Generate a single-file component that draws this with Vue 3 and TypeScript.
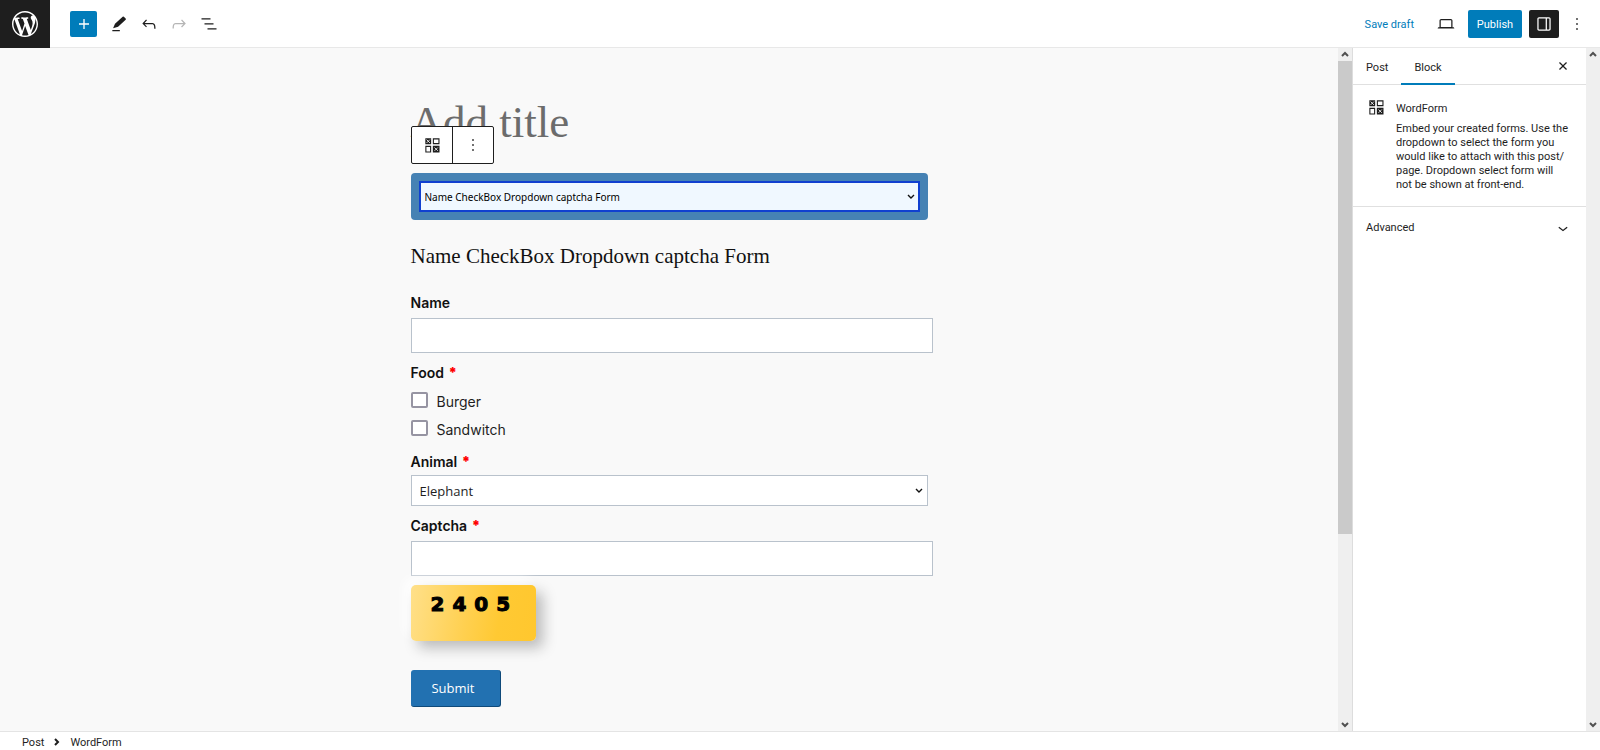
<script setup lang="ts">
import { ref } from 'vue'

const formName = 'Name CheckBox Dropdown captcha Form'
const selectedForm = ref(formName)
const animal = ref('Elephant')
const foods = ['Burger', 'Sandwitch']
const captchaDigits = ['2', '4', '0', '5']

const icons = {
  wordpress:
    'M20 10c0-5.51-4.49-10-10-10C4.48 0 0 4.49 0 10c0 5.52 4.48 10 10 10 5.51 0 10-4.48 10-10zM7.78 15.37L4.37 6.22c.55-.02 1.17-.08 1.17-.08.5-.06.44-1.13-.06-1.11 0 0-1.45.11-2.37.11-.18 0-.37 0-.58-.01C4.12 2.69 6.87 1.11 10 1.11c2.33 0 4.45.87 6.05 2.34-.68-.11-1.65.39-1.65 1.58 0 .74.45 1.36.9 2.1.35.61.55 1.36.55 2.46 0 1.49-1.4 5-1.4 5l-3.03-8.37c.54-.02.82-.17.82-.17.5-.05.44-1.25-.06-1.22 0 0-1.44.12-2.38.12-.87 0-2.33-.12-2.33-.12-.5-.03-.56 1.2-.06 1.22l.92.08 1.26 3.41zM17.41 10c.24-.64.74-1.87.43-4.25.7 1.29 1.05 2.71 1.05 4.25 0 3.29-1.73 6.24-4.4 7.78.97-2.59 1.94-5.2 2.92-7.78zM6.1 18.09C3.12 16.65 1.11 13.53 1.11 10c0-1.3.23-2.48.72-3.59C3.25 10.3 4.67 14.2 6.1 18.09zm4.03-6.63l2.58 6.98c-.86.29-1.76.45-2.71.45-.79 0-1.57-.11-2.29-.33.81-2.38 1.62-4.74 2.42-7.1z',
  plus: 'M18 11.2h-5.2V6h-1.6v5.2H6v1.6h5.2V18h1.6v-5.2H18z',
  edit: 'M20 5.500L17.800 3.200Q17.100 2.600 16.400 3.200L7.200 11.700l-2.300 5.400 6-1.900L20 7Q20.700 6.300 20 5.500zM4 20.800h9v-1.600H4z',
  undo: 'M18.3 11.7c-.6-.6-1.4-.9-2.3-.9H6.7l2.9-3.3-1.1-1-4.5 5L8.5 16l1-1-2.7-2.7H16c.5 0 .9.2 1.3.5 1 1 1 3.4 1 4.5v.3h1.5v-.2c0-1.5 0-4.3-1.5-5.7z',
  redo: 'M15.6 6.5l-1.1 1 2.9 3.3H8c-.9 0-1.7.3-2.3.9-1.4 1.5-1.4 4.2-1.4 5.6v.2h1.5v-.3c0-1.1 0-3.5 1-4.5.3-.3.7-.5 1.3-.5h9.2L14.5 15l1.1 1.1 4.6-4.6-4.6-5z',
  list: 'M13.8 5.2H3v1.5h10.8V5.2zm-3.6 12v1.5H21v-1.5H10.2zm7.2-6H6.6v1.5h10.8v-1.5z',
  laptop:
    'M20.5 16h-.7V8c0-1.1-.9-2-2-2H6.2c-1.1 0-2 .9-2 2v8h-.7c-.8 0-1.5.7-1.5 1.5h20c0-.8-.7-1.5-1.5-1.5zM5.7 8c0-.3.2-.5.5-.5h11.6c.3 0 .5.2.5.5v7.6H5.7V8z',
  drawer:
    'M18 4H6c-1.1 0-2 .9-2 2v12c0 1.1.9 2 2 2h12c1.1 0 2-.9 2-2V6c0-1.1-.9-2-2-2zm-4 14.5H6c-.3 0-.5-.2-.5-.5V6c0-.3.2-.5.5-.5h8v13zm4.5-.5c0 .3-.2.5-.5.5h-2.5v-13H18c.3 0 .5.2.5.5v12z',
  more: 'M13 19h-2v-2h2v2zm0-6h-2v-2h2v2zm0-6h-2V5h2v2z',
  close:
    'M12 13.06l3.712 3.713 1.061-1.06L13.061 12l3.712-3.712-1.06-1.06L12 10.938 8.288 7.227l-1.061 1.06L10.939 12l-3.712 3.712 1.06 1.061L12 13.061z',
  chevron: 'M17.5 11.6L12 16l-5.5-4.4.9-1.2L12 14l4.5-3.6 1 1.2z',
  block:
    'M4 4h7v7H4zM13 4h8v7h-8zM14.300 5.300v4.400h5.400v-4.400zM4 13h7v8H4zM5.300 14.300v5.400h4.400v-5.400zM13 13h8v8h-8z',
}

const tools = [
  { label: 'Tools', path: icons.edit, disabled: false },
  { label: 'Undo', path: icons.undo, disabled: false },
  { label: 'Redo', path: icons.redo, disabled: true },
  { label: 'List view', path: icons.list, disabled: false },
]
</script>

<template>
  <div class="editor">
    <header class="topbar">
      <a class="logo" href="#" aria-label="View posts">
        <svg viewBox="0 0 20 20" width="26" height="26"><path :d="icons.wordpress" /></svg>
      </a>
      <div class="tools">
        <button class="inserter" type="button" aria-label="Add block">
          <svg viewBox="0 0 24 24" width="20" height="20"><path :d="icons.plus" /></svg>
        </button>
        <button
          v-for="tool in tools"
          :key="tool.label"
          class="tool"
          type="button"
          :aria-label="tool.label"
          :disabled="tool.disabled"
        >
          <svg viewBox="0 0 24 24" width="20" height="20"><path :d="tool.path" /></svg>
        </button>
      </div>
      <div class="actions">
        <button class="save" type="button">Save draft</button>
        <button class="preview" type="button" aria-label="Preview">
          <svg viewBox="0 0 24 24" width="20" height="20"><path :d="icons.laptop" /></svg>
        </button>
        <button class="publish" type="button">Publish</button>
        <button class="settings" type="button" aria-label="Settings">
          <svg viewBox="0 0 24 24" width="20" height="20"><path :d="icons.drawer" /></svg>
        </button>
        <button class="options" type="button" aria-label="Options">
          <svg viewBox="0 0 24 24" width="20" height="20"><path :d="icons.more" /></svg>
        </button>
      </div>
    </header>

    <div class="workspace">
      <main class="canvas">
        <div class="column">
          <h1 class="title">Add title</h1>
          <div class="block-toolbar">
            <button type="button" aria-label="WordForm">
              <svg viewBox="0 0 24 24" width="20" height="20">
                <path fill-rule="evenodd" :d="icons.block" />
                <path class="cross" d="M5.500 5.500l4 4m0-4l-4 4M15 15l4 4m0-4l-4 4" />
              </svg>
            </button>
            <button type="button" aria-label="Block options">
              <svg viewBox="0 0 24 24" width="20" height="20"><path :d="icons.more" /></svg>
            </button>
          </div>

          <div class="picker">
            <div class="select-wrap">
              <select v-model="selectedForm" class="form-select" aria-label="Form">
                <option>{{ formName }}</option>
              </select>
              <svg class="arrow" viewBox="0 0 8 6" width="8" height="6"><path d="M1 1l3 3 3-3" /></svg>
            </div>
          </div>

          <h2 class="form-title">{{ formName }}</h2>

          <form class="form" @submit.prevent>
            <label class="label" for="name">Name</label>
            <input id="name" class="text" type="text" />

            <fieldset class="foods">
              <legend class="label">Food <span class="required">*</span></legend>
              <label v-for="food in foods" :key="food" class="food">
                <input type="checkbox" />
                <span>{{ food }}</span>
              </label>
            </fieldset>

            <label class="label" for="animal">Animal <span class="required">*</span></label>
            <div class="select-wrap animal-wrap">
              <select id="animal" v-model="animal" class="animal">
                <option>Elephant</option>
              </select>
              <svg class="arrow" viewBox="0 0 8 6" width="8" height="6"><path d="M1 1l3 3 3-3" /></svg>
            </div>

            <label class="label" for="captcha">Captcha <span class="required">*</span></label>
            <input id="captcha" class="text" type="text" />
            <div class="captcha">
              <span v-for="(digit, i) in captchaDigits" :key="i">{{ digit }}</span>
            </div>

            <button class="submit" type="submit">Submit</button>
          </form>
        </div>
      </main>

      <div class="scrollbar" aria-hidden="true">
        <svg viewBox="0 0 14 13" width="14" height="13"><path d="M4 8l3-3 3 3" /></svg>
        <div class="track"><div class="thumb"></div></div>
        <svg viewBox="0 0 14 13" width="14" height="13"><path d="M4 5l3 3 3-3" /></svg>
      </div>

      <aside class="sidebar">
        <div class="tabs">
          <button class="tab" type="button">Post</button>
          <button class="tab active" type="button">Block</button>
          <button class="close" type="button" aria-label="Close settings">
            <svg viewBox="0 0 24 24" width="20" height="20"><path :d="icons.close" /></svg>
          </button>
        </div>
        <section class="card">
          <svg viewBox="0 0 24 24" width="20" height="20">
            <path fill-rule="evenodd" :d="icons.block" />
            <path class="cross" d="M5.500 5.500l4 4m0-4l-4 4M15 15l4 4m0-4l-4 4" />
          </svg>
          <div>
            <h2>WordForm</h2>
            <p>
              Embed your created forms. Use the dropdown to select the form you would like to attach
              with this post/<wbr />page. Dropdown select form will not be shown at front-end.
            </p>
          </div>
        </section>
        <button class="advanced" type="button">
          Advanced
          <svg viewBox="0 0 24 24" width="20" height="20"><path :d="icons.chevron" /></svg>
        </button>
      </aside>

      <div class="scrollbar" aria-hidden="true">
        <svg viewBox="0 0 14 13" width="14" height="13"><path d="M4 8l3-3 3 3" /></svg>
        <div class="track"></div>
        <svg viewBox="0 0 14 13" width="14" height="13"><path d="M4 5l3 3 3-3" /></svg>
      </div>
    </div>

    <footer class="breadcrumb">
      <a href="#">Post</a>
      <svg viewBox="0 0 6 8" width="6" height="8"><path d="M1 1l3 3-3 3" /></svg>
      <a href="#">WordForm</a>
    </footer>
  </div>
</template>

<style>
body {
  margin: 0;
}
</style>

<style scoped>
.editor {
  display: flex;
  flex-direction: column;
  height: 100vh;
  overflow: hidden;
  background: #fff;
  color: #1e1e1e;
  font-family: Roboto, sans-serif;
  font-size: 11px;
}
* {
  box-sizing: border-box;
}
button,
select,
input {
  font: inherit;
  color: inherit;
  margin: 0;
}
button {
  display: flex;
  align-items: center;
  justify-content: center;
  padding: 0;
  border: 0;
  background: none;
}
svg {
  display: block;
  flex: none;
  fill: currentColor;
}
.cross {
  fill: none;
  stroke: #fff;
  stroke-width: 1;
}

.topbar {
  display: flex;
  flex: none;
  height: 48px;
  border-bottom: 1px solid #e8e8e8;
}
.logo {
  display: grid;
  place-items: center;
  width: 50px;
  height: 48px;
  background: #1e1e1e;
  color: #fff;
}
.tools {
  display: flex;
  align-items: center;
  gap: 10px;
  margin-left: 20px;
}
.inserter {
  width: 27px;
  height: 26px;
  border-radius: 2px;
  background: #007cba;
  color: #fff;
  margin-right: 2px;
}
.tool:disabled {
  color: #b5b5b5;
}
.actions {
  display: flex;
  align-items: center;
  margin-left: auto;
  padding-right: 13px;
}
.save {
  color: #007cba;
  margin-right: 22px;
  padding-top: 2px;
}
.publish {
  width: 54px;
  height: 28px;
  margin: 0 7px 0 12px;
  padding-top: 2px;
  border-radius: 2px;
  background: #007cba;
  color: #fff;
}
.settings {
  width: 30px;
  height: 28px;
  margin-right: 8px;
  border-radius: 2px;
  background: #1e1e1e;
  color: #fff;
}

.workspace {
  display: flex;
  flex: 1;
  min-height: 0;
}
.canvas {
  flex: 1;
  background: #f9f9f9;
  overflow: hidden;
}
.column {
  width: 517px;
  margin: 0 auto;
  padding-top: 50px;
}
.title {
  margin: 0;
  color: #6c6c6c;
  font: 400 45px/48px 'Liberation Serif', serif;
}
.block-toolbar {
  position: relative;
  display: flex;
  width: 83px;
  height: 38px;
  margin-top: -20px;
  border: 1px solid #1e1e1e;
  border-radius: 2px;
  background: #fff;
}
.block-toolbar button {
  flex: 1;
}
.block-toolbar button + button {
  border-left: 1px solid #1e1e1e;
}
.picker {
  margin-top: 9px;
  padding: 8px;
  border-radius: 4px;
  background: #4682b4;
}
.select-wrap {
  position: relative;
}
.form-select,
.animal {
  appearance: none;
  display: block;
  width: 100%;
  height: 31px;
  border-radius: 0;
  outline: 0;
}
.form-select {
  padding: 0 4px;
  border: 2px solid #1040d0;
  background: #f0f8ff;
  color: #000;
  font-family: 'Noto Sans', sans-serif;
  font-size: 10px;
}
.arrow {
  position: absolute;
  top: 13px;
  right: 5px;
  fill: none;
  stroke: #111;
  stroke-width: 1.4;
  pointer-events: none;
}
.form-title {
  margin: 22px 0 23px;
  color: #111;
  font: 400 21px/28px 'Liberation Serif', serif;
}
.form {
  font-family: Inter, sans-serif;
  font-size: 14px;
  line-height: 20px;
}
.label {
  display: block;
  padding: 0;
  font-weight: 600;
  color: #111;
}
.required {
  margin-left: 1px;
  color: #f00;
  font-weight: 900;
}
.text {
  display: block;
  width: calc(100% + 5px);
  height: 35px;
  margin-top: 5px;
  padding: 0 8px;
  border: 1px solid #b9c2cc;
  background: #fff;
}
.foods {
  min-width: 0;
  margin: 10px 0 13px;
  padding: 0;
  border: 0;
}
.food {
  display: flex;
  height: 20px;
  margin-top: 8px;
  gap: 9px;
}
.food span {
  padding-top: 1px;
}
.food input {
  appearance: none;
  width: 17px;
  height: 16px;
  margin-top: 1px;
  border: 2px solid #9694a2;
  border-radius: 2px;
  background: #fff;
}
.animal-wrap {
  margin: 3px 0 10px;
}
.animal {
  padding: 0 8px;
  border: 1px solid #b9c2cc;
  background: #fff;
  font-family: 'Open Sans', sans-serif;
  font-size: 13px;
}
.captcha {
  display: flex;
  gap: 8px;
  width: 125px;
  height: 56px;
  margin-top: 9px;
  padding: 8px 20px;
  border-radius: 5px;
  background: linear-gradient(100deg, #ffe08a, #ffd050 45%, #ffc933 70%, #ffc72e);
  box-shadow: 7px 7px 14px #bbb, -6px -6px 12px #fff;
  color: #000;
  font: 700 20px/22px 'DejaVu Sans', sans-serif;
  -webkit-text-stroke: 1px #000;
}
.submit {
  width: 90px;
  height: 37px;
  margin-top: 29px;
  padding-right: 4px;
  border: solid #0f4a7a;
  border-width: 0 1px 1px 0;
  border-radius: 3px;
  background: #2271b1;
  color: #fff;
  font-family: 'Open Sans', sans-serif;
  font-size: 13px;
}

.scrollbar {
  display: flex;
  flex-direction: column;
  flex: none;
  width: 14px;
  background: #efefef;
}
.scrollbar svg {
  fill: none;
  stroke: #505050;
  stroke-width: 2;
}
.track {
  flex: 1;
}
.thumb {
  height: 72%;
  background: #cacaca;
}

.sidebar {
  flex: none;
  width: 234px;
  border-left: 1px solid #ddd;
}
.tabs {
  display: flex;
  height: 37px;
  border-bottom: 1px solid #e0e0e0;
}
.tab {
  height: 37px;
  padding: 2px 13px 0;
}
.tab.active {
  box-shadow: inset 0 -2px #007cba;
}
.close {
  margin: 0 13px 0 auto;
}
.card {
  display: flex;
  gap: 10px;
  padding: 12px 16px 14px 13px;
  border-bottom: 1px solid #e0e0e0;
}
.card h2 {
  margin: 5px 0 6px;
  font-size: 11px;
  font-weight: 400;
  line-height: 14px;
}
.card p {
  margin: 0;
  line-height: 14px;
}
.advanced {
  justify-content: space-between;
  width: 100%;
  height: 41px;
  padding: 0 13px;
}

.breadcrumb {
  display: flex;
  flex: none;
  align-items: center;
  gap: 10px;
  height: 19px;
  padding: 2px 22px 0;
  border-top: 1px solid #e4e4e4;
}
.breadcrumb a {
  color: inherit;
  text-decoration: none;
}
.breadcrumb svg {
  fill: none;
  stroke: #1e1e1e;
  stroke-width: 2;
}
</style>
